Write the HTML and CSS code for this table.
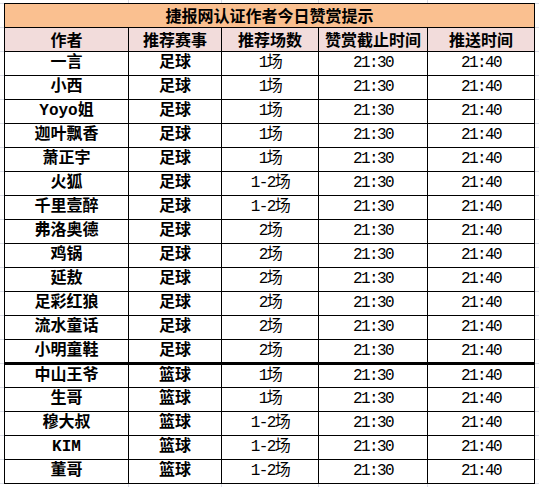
FILE: index.html
```html
<!DOCTYPE html>
<html lang="zh-CN">
<head>
<meta charset="utf-8">
<title>捷报网认证作者今日赞赏提示</title>
<link rel="stylesheet" href="styles.css">
</head>
<body>
<div class="sheet">
  <div class="table">
    <div class="title">捷报网认证作者今日赞赏提示</div>
    <div class="row head">
      <div class="c">作者</div><div class="c">推荐赛事</div><div class="c">推荐场数</div><div class="c">赞赏截止时间</div><div class="c">推送时间</div>
    </div>
    <div class="row"><div class="c b">一言</div><div class="c b">足球</div><div class="c n">1场</div><div class="c n">21:30</div><div class="c n">21:40</div></div>
    <div class="row"><div class="c b">小西</div><div class="c b">足球</div><div class="c n">1场</div><div class="c n">21:30</div><div class="c n">21:40</div></div>
    <div class="row"><div class="c b">Yoyo姐</div><div class="c b">足球</div><div class="c n">1场</div><div class="c n">21:30</div><div class="c n">21:40</div></div>
    <div class="row"><div class="c b">迦叶飘香</div><div class="c b">足球</div><div class="c n">1场</div><div class="c n">21:30</div><div class="c n">21:40</div></div>
    <div class="row"><div class="c b">萧正宇</div><div class="c b">足球</div><div class="c n">1场</div><div class="c n">21:30</div><div class="c n">21:40</div></div>
    <div class="row"><div class="c b">火狐</div><div class="c b">足球</div><div class="c n">1-2场</div><div class="c n">21:30</div><div class="c n">21:40</div></div>
    <div class="row"><div class="c b">千里壹醉</div><div class="c b">足球</div><div class="c n">1-2场</div><div class="c n">21:30</div><div class="c n">21:40</div></div>
    <div class="row"><div class="c b">弗洛奥德</div><div class="c b">足球</div><div class="c n">2场</div><div class="c n">21:30</div><div class="c n">21:40</div></div>
    <div class="row"><div class="c b">鸡锅</div><div class="c b">足球</div><div class="c n">2场</div><div class="c n">21:30</div><div class="c n">21:40</div></div>
    <div class="row"><div class="c b">延敖</div><div class="c b">足球</div><div class="c n">2场</div><div class="c n">21:30</div><div class="c n">21:40</div></div>
    <div class="row"><div class="c b">足彩红狼</div><div class="c b">足球</div><div class="c n">2场</div><div class="c n">21:30</div><div class="c n">21:40</div></div>
    <div class="row"><div class="c b">流水童话</div><div class="c b">足球</div><div class="c n">2场</div><div class="c n">21:30</div><div class="c n">21:40</div></div>
    <div class="row split-above"><div class="c b">小明童鞋</div><div class="c b">足球</div><div class="c n">2场</div><div class="c n">21:30</div><div class="c n">21:40</div></div>
    <div class="row split-below"><div class="c b">中山王爷</div><div class="c b">篮球</div><div class="c n">1场</div><div class="c n">21:30</div><div class="c n">21:40</div></div>
    <div class="row"><div class="c b">生哥</div><div class="c b">篮球</div><div class="c n">1场</div><div class="c n">21:30</div><div class="c n">21:40</div></div>
    <div class="row"><div class="c b">穆大叔</div><div class="c b">篮球</div><div class="c n">1-2场</div><div class="c n">21:30</div><div class="c n">21:40</div></div>
    <div class="row"><div class="c b">KIM</div><div class="c b">篮球</div><div class="c n">1-2场</div><div class="c n">21:30</div><div class="c n">21:40</div></div>
    <div class="row"><div class="c b">董哥</div><div class="c b">篮球</div><div class="c n">1-2场</div><div class="c n">21:30</div><div class="c n">21:40</div></div>
  </div>
</div>
</body>
</html>
```
FILE: styles.css
```css
html, body {
  margin: 0;
  padding: 0;
  background-color: #ffffff;
}
body {
  width: 539px;
  height: 487px;
  overflow: hidden;
  font-family: "Liberation Mono", "Noto Sans CJK SC", monospace;
  color: #000;
  background-image:
    linear-gradient(to right,
      transparent 128px, #dadce6 128px, #dadce6 129px, transparent 129px,
      transparent 221px, #dadce6 221px, #dadce6 222px, transparent 222px,
      transparent 318px, #dadce6 318px, #dadce6 319px, transparent 319px,
      transparent 427px, #dadce6 427px, #dadce6 428px, transparent 428px),
    repeating-linear-gradient(to bottom, #dadce6 0, #dadce6 1px, transparent 1px, transparent 24px);
  background-position: 0 0, 0 3px;
  background-repeat: no-repeat, repeat-y;
}
.sheet {
  padding: 3px 0 0 4px;
}
.table {
  width: 531px;
  box-sizing: border-box;
  border-top: 1px solid #000;
  border-left: 1px solid #000;
  background: #fff;
}
.title {
  height: 24px;
  box-sizing: border-box;
  border-right: 1px solid #000;
  border-bottom: 1px solid #000;
  background: #fac090;
  font-family: "Noto Sans CJK SC", sans-serif;
  font-weight: 700;
  font-size: 16px;
  line-height: 23px;
  text-align: center;
}
.row {
  display: grid;
  grid-template-columns: 124px 93px 97px 109px 107px;
}
.c {
  height: 24px;
  box-sizing: border-box;
  border-right: 1px solid #000;
  border-bottom: 1px solid #000;
  text-align: center;
  font-size: 16px;
  line-height: 23px;
  white-space: nowrap;
}
.head .c {
  background: #f2dcdb;
  font-family: "Noto Sans CJK SC", sans-serif;
  font-weight: 700;
}
.b {
  font-weight: 700;
}
.n {
  font-size: 16px;
  letter-spacing: -1.6px;
  font-weight: 400;
}
.split-above .c {
  border-bottom-width: 2px;
  line-height: 22px;
}
.split-below .c {
  border-top: 1px solid #000;
  line-height: 22px;
}
```
